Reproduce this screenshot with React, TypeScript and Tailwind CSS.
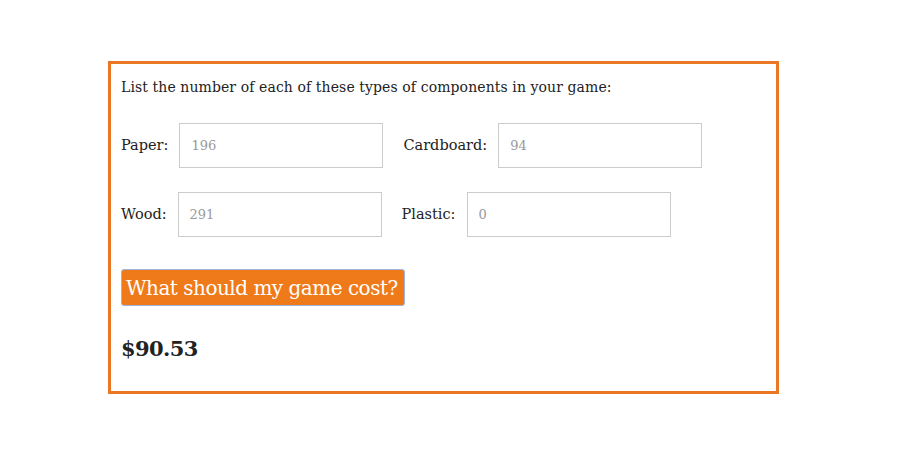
const fields = [
  [
    { label: "Paper:", value: "196" },
    { label: "Cardboard:", value: "94" },
  ],
  [
    { label: "Wood:", value: "291" },
    { label: "Plastic:", value: "0" },
  ],
];

export default function App() {
  return (
    <div className="min-h-[455px] w-[900px] bg-white pt-[61px] pl-[108px] font-['DejaVu_Serif',serif] text-[#222]">
      <div className="w-[671px] h-[333px] border-[3px] border-[#ea7724] px-[10px] pt-[13px]">
        <p className="text-[14px] leading-[20px] tracking-[0.1px]">
          List the number of each of these types of components in your game:
        </p>
        <div className="mt-[26px] flex flex-col gap-[24px]">
          {fields.map((row, i) => (
            <div key={i} className="flex items-center gap-[20px]">
              {row.map((f) => (
                <label key={f.label} className="flex items-center gap-[11px] text-[14.5px]">
                  <span>{f.label}</span>
                  <input
                    readOnly
                    value={f.value}
                    className="w-[204px] h-[45px] border border-[#cccccc] px-[11px] text-[13px] text-[#999] outline-none font-['DejaVu_Serif',serif]"
                  />
                </label>
              ))}
            </div>
          ))}
        </div>
        <button className="mt-[32px] h-[37px] w-[284px] rounded-[3px] border border-[#9fb6dc] bg-[#ef7a1a] text-left pl-[4px] text-[20px] text-white font-['DejaVu_Serif',serif] tracking-[-0.5px]">
          What should my game cost?
        </button>
        <p className="mt-[27px] text-[21px] font-semibold tracking-[-0.6px]">$90.53</p>
      </div>
    </div>
  );
}
